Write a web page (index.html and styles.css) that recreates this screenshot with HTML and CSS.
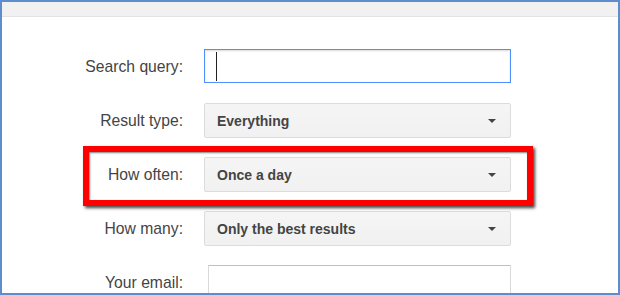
FILE: index.html
```html
<!DOCTYPE html>
<html lang="en">
<head>
    <meta charset="UTF-8">
    <meta name="viewport" content="width=device-width, initial-scale=1.0">
    <title>Create alert</title>
    <link rel="stylesheet" href="styles.css">
</head>
<body>
    <div class="window">
        <div class="topbar"></div>
        <form class="alert-form">
            <label class="label" for="query">Search query:</label>
            <div class="field text focused" id="query"><span class="caret"></span></div>

            <span class="label">Result type:</span>
            <div class="field select">Everything<span class="arrow"></span></div>

            <span class="label">How often:</span>
            <div class="field select">Once a day<span class="arrow"></span></div>

            <span class="label">How many:</span>
            <div class="field select">Only the best results<span class="arrow"></span></div>

            <span class="label">Your email:</span>
            <div class="field text email"></div>
        </form>
        <div class="highlight"></div>
    </div>
</body>
</html>
```

FILE: styles.css
```css
html, body {
    margin: 0;
    padding: 0;
    background: #fff;
}

.window {
    position: relative;
    width: 620px;
    height: 295px;
    box-sizing: border-box;
    border: 2px solid #5b8dcf;
    overflow: hidden;
    font-family: "Liberation Sans", Arial, sans-serif;
}

.topbar {
    height: 14px;
    background-color: #f1f1f1;
    border-bottom: 1px solid #e3e3e3;
}

.alert-form {
    display: grid;
    grid-template-columns: 181px 307px;
    grid-auto-rows: 35px;
    column-gap: 21px;
    row-gap: 19px;
    padding-top: 32px;
}

.label {
    align-self: center;
    justify-self: end;
    font-size: 15.7px;
    color: #444;
}

.field {
    box-sizing: border-box;
}

.text {
    height: 34px;
    background: #fff;
    border: 1px solid #d9d9d9;
    border-top-color: #c0c0c0;
}

.focused {
    border: 1px solid #4d90fe;
    box-shadow: inset 0 1px 2px rgba(0, 0, 0, 0.15);
    padding: 2px 0 0 11px;
}

.caret {
    display: block;
    width: 1px;
    height: 29px;
    background-color: #222;
}

.email {
    margin-left: 4px;
    height: 40px;
}

.select {
    display: flex;
    align-items: center;
    justify-content: space-between;
    padding: 0 14px 0 12px;
    font-size: 14px;
    font-weight: bold;
    color: #444;
    background: linear-gradient(#f5f5f5, #f1f1f1);
    border: 1px solid #dcdcdc;
    border-radius: 2px;
}

.arrow {
    width: 0;
    height: 0;
    border-left: 4px solid transparent;
    border-right: 4px solid transparent;
    border-top: 4px solid #444;
    margin-top: 1px;
}

.highlight {
    position: absolute;
    left: 81px;
    top: 144px;
    width: 450px;
    height: 60px;
    box-sizing: border-box;
    border: 6px solid #f00;
    box-shadow: 2px 2px 3px rgba(0, 0, 0, 0.75), inset 1px 1px 2px rgba(0, 0, 0, 0.5);
}
```
